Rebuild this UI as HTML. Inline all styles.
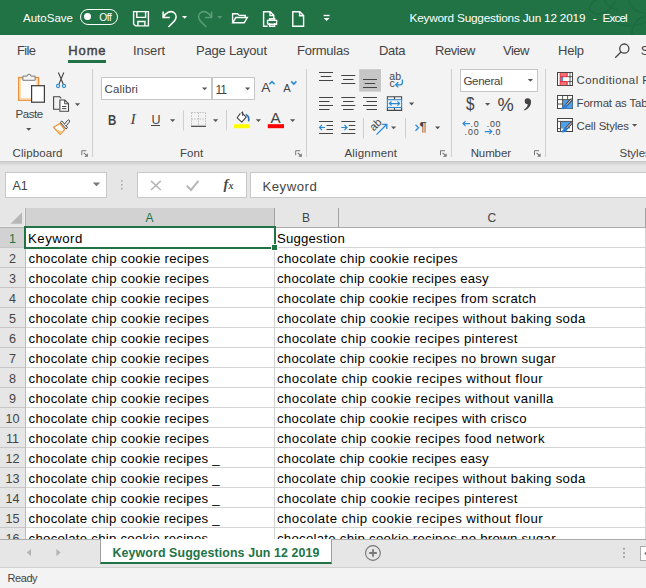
<!DOCTYPE html>
<html>
<head>
<meta charset="utf-8">
<title>Keyword Suggestions Jun 12 2019 - Excel</title>
<style>
*{box-sizing:border-box;margin:0;padding:0}
html,body{width:646px;height:588px;overflow:hidden;background:#f3f3f3;font-family:"Liberation Sans",sans-serif;color:#444}
#app{position:relative;width:646px;height:588px;overflow:hidden}
#app div,#app span,#app svg{position:absolute}
.tx{white-space:nowrap;display:block}
svg{overflow:visible}
#title{left:0;top:0;width:646px;height:35px;background:#217346;overflow:hidden}
#tabs{left:0;top:35px;width:646px;height:31px;background:#f3f3f3;overflow:hidden}
#ribbon{left:0;top:66px;width:646px;height:95px;background:#f3f3f3;overflow:hidden}
.sep{width:1px;background:#cfcfcf}
.box{background:#fff;border:1px solid #c6c6c6}
#fbar{left:0;top:161px;width:646px;height:47px;background:#e6e6e6;overflow:hidden}
#grid{left:0;top:208px;width:646px;height:331px;background:#fff;overflow:hidden}
#sheetbar{left:0;top:539px;width:646px;height:29px;background:#e6e6e6;overflow:hidden}
#status{left:0;top:568px;width:646px;height:20px;background:#f3f3f3;overflow:hidden}
.hl{height:1px;background:#d4d4d4;left:26px;width:620px}
.vl{width:1px;background:#d4d4d4;top:20px;height:320px}
</style>
</head>
<body>
<div id="app">

<div id="title">
<svg style="left:520px;top:0" width="126" height="35" viewBox="520 0 126 35" fill="none" stroke="#1d6b40" stroke-width="1.4"><path d="M596 0c-8 4-8 11-1 13.500s16-3 21-13.500"/><path d="M604 0c3 5 8 9 14 10"/><path d="M629 0c1 7 7 12.500 17 13.500"/><path d="M632 35c-1-9 5-17 14-19"/><path d="M612 20c8 6 20 8 34 2"/></svg>
<span class="tx" style="left:23.00px;top:12.97px;font-size:11.5px;line-height:11.5px;color:#fff;letter-spacing:0.019px;">AutoSave</span>
<div style="left:80px;top:9px;width:38px;height:16px;border:1px solid #fff;border-radius:8px"></div>
<div style="left:84.4px;top:13.4px;width:7.1px;height:7.1px;border-radius:50%;background:#fff"></div>
<span class="tx" style="left:99.20px;top:12.68px;font-size:10.3px;line-height:10.3px;color:#fff;letter-spacing:-0.474px;">Off</span>
<span class="tx" style="left:409.50px;top:12.91px;font-size:11.8px;line-height:11.8px;color:#fff;letter-spacing:-0.212px;">Keyword Suggestions Jun 12 2019</span>
<span class="tx" style="left:592.80px;top:12.91px;font-size:11.8px;line-height:11.8px;color:#fff;">-</span>
<span class="tx" style="left:602.60px;top:12.91px;font-size:11.8px;line-height:11.8px;color:#fff;letter-spacing:-0.939px;">Excel</span>
</div>
<div style="left:0;top:0;width:646px;height:35px"><svg style="left:0;top:0" width="646" height="35" viewBox="0 0 646 35" fill="none" stroke-linejoin="miter"><path d="M133.6 11.6H148.4V25.9H135.6L133.6 23.9z" stroke="#fff" stroke-width="1.4"/><path d="M136.8 11.6V17.4H145.6V11.6M137.9 25.9V21.5H144.9V25.9" stroke="#fff" stroke-width="1.4"/><path d="M163.1 11.6V17.5H169.8" stroke="#fff" stroke-width="1.5"/><path d="M163.4 17.2C165.6 12.6 170.6 10.2 174 12.6C177.2 14.9 176.6 18.8 173.8 21.6L168.4 27" stroke="#fff" stroke-width="1.5"/><path d="M182 16h5.2l-2.6 2.8z" fill="#fff"/><path d="M211.6 11.6V17.5H204.9" stroke="#5a9c78" stroke-width="1.5"/><path d="M211.3 17.2C209.1 12.6 204.1 10.2 200.7 12.6C197.500 14.9 198.1 18.8 200.9 21.6L206.3 27" stroke="#5a9c78" stroke-width="1.5"/><path d="M217.2 16h5.2l-2.6 2.8z" fill="#5a9c78"/><path d="M232.6 22.6V13.8H237.6L239.2 15.4H245.2V17.4" stroke="#fff" stroke-width="1.4"/><path d="M232.7 22.8L235.8 17.5H247.3L244.2 22.8z" stroke="#fff" stroke-width="1.4"/><path d="M267.6 26.2H263.6V11.8H270.2L273.8 15.4V18.6M270 11.8V15.6H273.8" stroke="#fff" stroke-width="1.4"/><path d="M267.6 24.2V20.4H276.6V24.2H267.6M269.6 20.4V18.8H274.6V20.4M269.6 23V26.2H274.6V23" stroke="#fff" stroke-width="1.4"/><path d="M292.8 11.8H299.8L303.6 15.6V26.2H292.8zM299.6 11.8V15.8H303.6" stroke="#fff" stroke-width="1.4"/><path d="M323.6 15.5H329.6" stroke="#fff" stroke-width="1.4"/><path d="M323.6 18h6l-3 3.1z" fill="#fff"/></svg></div>
<div id="tabs">
<span class="tx" style="left:17.00px;top:9.20px;font-size:13px;line-height:13px;color:#444;letter-spacing:-0.649px;">File</span>
<span class="tx" style="left:133.00px;top:9.20px;font-size:13px;line-height:13px;color:#444;letter-spacing:-0.103px;">Insert</span>
<span class="tx" style="left:196.00px;top:9.20px;font-size:13px;line-height:13px;color:#444;letter-spacing:-0.200px;">Page Layout</span>
<span class="tx" style="left:297.00px;top:9.20px;font-size:13px;line-height:13px;color:#444;letter-spacing:-0.240px;">Formulas</span>
<span class="tx" style="left:379.00px;top:9.20px;font-size:13px;line-height:13px;color:#444;letter-spacing:-0.320px;">Data</span>
<span class="tx" style="left:435.00px;top:9.20px;font-size:13px;line-height:13px;color:#444;letter-spacing:-0.445px;">Review</span>
<span class="tx" style="left:503.00px;top:9.20px;font-size:13px;line-height:13px;color:#444;letter-spacing:-0.481px;">View</span>
<span class="tx" style="left:558.00px;top:9.20px;font-size:13px;line-height:13px;color:#444;letter-spacing:-0.246px;">Help</span>
<span class="tx" style="left:68.30px;top:9.20px;font-size:13px;line-height:13px;color:#444;letter-spacing:0.874px;-webkit-text-stroke:0.45px #444;">Home</span>
<span class="tx" style="left:640.70px;top:9.20px;font-size:13px;line-height:13px;color:#444;">Search</span>
<div style="left:68px;top:25px;width:38px;height:3px;background:#217346"></div>
<svg style="left:614px;top:8px" width="17" height="16" viewBox="0 0 17 16" fill="none" stroke="#444" stroke-width="1.3"><circle cx="10.3" cy="5.6" r="4.6"/><path d="M7 9L1.2 14.8"/></svg>
</div>
<div id="ribbon">
<div class="sep" style="left:92.0px;top:3px;height:88px"></div>
<div class="sep" style="left:306.0px;top:3px;height:88px"></div>
<div class="sep" style="left:451.0px;top:3px;height:88px"></div>
<div class="sep" style="left:545.0px;top:3px;height:88px"></div>
<span class="tx" style="left:15.60px;top:42.67px;font-size:11.5px;line-height:11.5px;color:#444;letter-spacing:-0.452px;">Paste</span>
<span class="tx" style="left:12.50px;top:82.17px;font-size:11.5px;line-height:11.5px;color:#444;letter-spacing:0.097px;">Clipboard</span>
<span class="tx" style="left:180.00px;top:81.77px;font-size:11.5px;line-height:11.5px;color:#444;letter-spacing:0.096px;">Font</span>
<span class="tx" style="left:344.40px;top:81.67px;font-size:11.5px;line-height:11.5px;color:#444;letter-spacing:0.183px;">Alignment</span>
<span class="tx" style="left:470.70px;top:81.77px;font-size:11.5px;line-height:11.5px;color:#444;letter-spacing:-0.120px;">Number</span>
<span class="tx" style="left:619.50px;top:81.77px;font-size:11.5px;line-height:11.5px;color:#444;">Styles</span>
<div class="box" style="left:101px;top:11px;width:111px;height:23px"></div>
<div class="box" style="left:212px;top:11px;width:43px;height:23px"></div>
<div class="box" style="left:460px;top:3px;width:78px;height:23px"></div>
<span class="tx" style="left:104.60px;top:18.07px;font-size:11.5px;line-height:11.5px;color:#444;letter-spacing:0.118px;">Calibri</span>
<span class="tx" style="left:215.60px;top:17.64px;font-size:12px;line-height:12px;color:#444;letter-spacing:-1.1px;">11</span>
<span class="tx" style="left:463.40px;top:10.07px;font-size:11.5px;line-height:11.5px;color:#444;letter-spacing:-0.252px;">General</span>
<span class="tx" style="left:108.40px;top:46.65px;font-size:14px;line-height:14px;color:#444;font-weight:bold;transform:scaleX(.82);transform-origin:0 0;">B</span>
<span class="tx" style="left:130.60px;top:45.38px;font-size:15.5px;line-height:15.5px;color:#444;font-style:italic;font-family:&quot;Liberation Serif&quot;,serif;">I</span>
<span class="tx" style="left:151.60px;top:47.72px;font-size:12.5px;line-height:12.5px;color:#444;letter-spacing:-1.327px;">U</span>
<div style="left:151.3px;top:59px;width:8.4px;height:1px;background:#444"></div>
<span class="tx" style="left:261.20px;top:14.99px;font-size:13.6px;line-height:13.6px;color:#444;">A</span>
<span class="tx" style="left:283.20px;top:17.22px;font-size:11.2px;line-height:11.2px;color:#444;">A</span>
<span class="tx" style="left:270.60px;top:44.03px;font-size:15.2px;line-height:15.2px;color:#444;">A</span>
<span class="tx" style="left:466.40px;top:28.84px;font-size:18.5px;line-height:18.5px;color:#444;transform:scaleX(.82);transform-origin:0 0;">$</span>
<span class="tx" style="left:497.40px;top:29.71px;font-size:18.3px;line-height:18.3px;color:#444;letter-spacing:-0.972px;">%</span>
<span class="tx" style="left:576.60px;top:9.00px;font-size:11.4px;line-height:11.4px;color:#444;letter-spacing:0.458px;">Conditional Formatting</span>
<span class="tx" style="left:576.60px;top:32.05px;font-size:11.4px;line-height:11.4px;color:#444;letter-spacing:-0.135px;">Format as Table</span>
<span class="tx" style="left:576.60px;top:54.85px;font-size:11.4px;line-height:11.4px;color:#444;letter-spacing:-0.145px;">Cell Styles</span>
<span class="tx" style="left:389.30px;top:4.81px;font-size:10.5px;line-height:10.5px;color:#444;letter-spacing:0.021px;">ab</span>
<span class="tx" style="left:389.50px;top:12.01px;font-size:10.5px;line-height:10.5px;color:#444;">c</span>
<span class="tx" style="left:374.6px;top:55.599999999999994px;font-size:11px;line-height:11px;color:#444;transform:rotate(-43deg);transform-origin:0 100%;">ab</span>
<span class="tx" style="left:419.40px;top:54.07px;font-size:13.5px;line-height:13.5px;color:#444;">¶</span>
<span class="tx" style="left:470.60px;top:54.05px;font-size:8.8px;line-height:8.8px;color:#444;letter-spacing:0.661px;">.0</span>
<span class="tx" style="left:464.60px;top:61.85px;font-size:8.8px;line-height:8.8px;color:#444;letter-spacing:0.883px;">.00</span>
<span class="tx" style="left:486.80px;top:54.05px;font-size:8.8px;line-height:8.8px;color:#444;letter-spacing:0.683px;">.00</span>
<span class="tx" style="left:492.60px;top:61.85px;font-size:8.8px;line-height:8.8px;color:#444;letter-spacing:0.461px;">.0</span>
<svg style="left:0;top:0" width="646" height="95" viewBox="0 66 646 95" fill="none" stroke-linecap="butt">
<rect x="18.7" y="77.6" width="19.8" height="22.6" fill="#fbfbfb" stroke="#ec8f3c" stroke-width="1.4"/>
<rect x="20.1" y="79" width="17" height="19.8" fill="none" stroke="#fad6a2" stroke-width="1.4"/>
<path d="M22.9 80.3v-4.2h4.2a1.9 1.9 0 0 1 3.8 0h4.2v4.2z" fill="#f3f3f3" stroke="#7a7a7a" stroke-width="1"/>
<rect x="31.6" y="85.7" width="12.8" height="16.5" fill="#fff" stroke="#3b3b3b" stroke-width="1.2"/>
<path d="M26.1 128h5.2l-2.6 2.8z" fill="#555" stroke="none"/>
<path d="M58.4 72.5L63.2 84M63.8 72.5L59 84" stroke="#444" stroke-width="1.1"/>
<circle cx="58.1" cy="86" r="1.6" stroke="#2b8ad6" stroke-width="1.1"/><circle cx="64" cy="86" r="1.6" stroke="#2b8ad6" stroke-width="1.1"/>
<path d="M59.3 109.2H53.6V96.8H59.7L61.2 98.3" stroke="#444" stroke-width="1.1"/>
<path d="M59.9 100H64.800L68.5 103.7V111.2H59.9z" fill="#fff" stroke="#444" stroke-width="1.1"/>
<path d="M64.7 100.2V103.8H68.3M62 106.5H66.4M62 108.600H66.4" stroke="#444" stroke-width="1"/>
<path d="M74.9 103.3h5.2l-2.6 2.8z" fill="#555" stroke="none"/>
<path d="M53.4 127.2L59.9 123.4L64.6 129.6L60.1 134.4z" fill="#fff" stroke="#f08c2e" stroke-width="1.2" stroke-linejoin="round"/>
<path d="M55.800 129.200L62.800 131.400L60.1 134z" fill="#fbc878"/>
<path d="M60.3 122.300L61.900 121L67.600 127.600L66 128.900z" fill="#f3f3f3" stroke="#444" stroke-width="1"/>
<path d="M64.400 124.100L67.500 120.400a1.200 1.200 0 0 1 1.900 1.500L66.300 125.800" fill="#f3f3f3" stroke="#444" stroke-width="1"/>
<path d="M81.8 155.2V150.7H86.3" fill="none" stroke="#777" stroke-width="1"/><path d="M83.89999999999999 152.79999999999998L87.3 156.2" stroke="#777" stroke-width="1.1" fill="none"/><path d="M87.89999999999999 153.2V156.79999999999998H84.3z" fill="#777" stroke="none"/>
<path d="M202 87.5h5.2l-2.6 2.8z" fill="#555" stroke="none"/>
<path d="M245 87.5h5.2l-2.6 2.8z" fill="#555" stroke="none"/>
<path d="M269.400 84.200L272 81.600L274.600 84.200" stroke="#2b8ad6" stroke-width="1.6"/>
<path d="M291.200 81.400L293.800 84L296.400 81.400" stroke="#2b8ad6" stroke-width="1.6"/>
<path d="M170 119.3h5.2l-2.6 2.8z" fill="#555" stroke="none"/>
<path d="M183.5 110.5V130.5" stroke="#cfcfcf" stroke-width="1"/>
<path d="M191.5 112.5H205.5M191.5 119H205.5M191.5 112.5V125.5M198.5 112.5V125.5M205.5 112.5V125.5" stroke="#bdbdbd" stroke-width="1" stroke-dasharray="1.5 1.2"/>
<path d="M191 126.3H206" stroke="#444" stroke-width="1.2"/>
<path d="M213 119.3h5.2l-2.6 2.8z" fill="#555" stroke="none"/>
<path d="M226.5 110V130.5" stroke="#cfcfcf" stroke-width="1"/>
<rect x="234" y="124.2" width="16" height="4" fill="#ffff00"/>
<path d="M240.400 113.400L237.200 117.800L241.800 122.200L246.200 117.200L241.400 112.400" stroke="#444" stroke-width="1.1" fill="#fff" stroke-linejoin="round"/>
<path d="M242.600 111.600V115.800" stroke="#444" stroke-width="1.1"/>
<path d="M245.800 114.400C248.400 115.400 249.200 118 248.600 121.400" stroke="#2b6cb8" stroke-width="1.600"/>
<path d="M255.8 119.3h5.2l-2.6 2.8z" fill="#555" stroke="none"/>
<rect x="267.8" y="124.2" width="16.2" height="4" fill="#ff0000"/>
<path d="M290 119.3h5.2l-2.6 2.8z" fill="#555" stroke="none"/>
<path d="M295.7 155.2V150.7H300.2" fill="none" stroke="#777" stroke-width="1"/><path d="M297.8 152.79999999999998L301.2 156.2" stroke="#777" stroke-width="1.1" fill="none"/><path d="M301.8 153.2V156.79999999999998H298.2z" fill="#777" stroke="none"/>
<rect x="359.2" y="69.2" width="21.8" height="22.4" fill="#c6c6c6"/>
<path d="M319 72.5H333M320.75 76.5H331.25M319 80.5H333" stroke="#444" stroke-width="1.1"/>
<path d="M341.3 75.5H355.3M343.05 79.5H353.55M341.3 83.5H355.3" stroke="#444" stroke-width="1.1"/>
<path d="M363 79.5H377M364.75 83.5H375.25M363 87.5H377" stroke="#444" stroke-width="1.1"/>
<path d="M319 97.5H333M319 101.5H329.5M319 105.5H333M319 109.5H329.5" stroke="#444" stroke-width="1.1"/>
<path d="M341.3 97.5H355.3M343.05 101.5H353.55M341.3 105.5H355.3M343.05 109.5H353.55" stroke="#444" stroke-width="1.1"/>
<path d="M363 97.5H377M366.5 101.5H377M363 105.5H377M366.5 109.5H377" stroke="#444" stroke-width="1.1"/>
<path d="M319 121.5H333M326.5 125.5H333M326.5 129.5H333M319 133.5H333" stroke="#444" stroke-width="1.1"/>
<path d="M319.5 127.5H325M322 125L319.5 127.5L322 130" stroke="#2b8ad6" stroke-width="1.2"/>
<path d="M341.3 121.5H355.3M348.8 125.5H355.3M348.8 129.5H355.3M341.3 133.5H355.3" stroke="#444" stroke-width="1.1"/>
<path d="M341.3 127.5H347M344.5 125L347 127.5L344.5 130" stroke="#2b8ad6" stroke-width="1.2"/>
<path d="M363.5 118V138.5M405.5 118V138.5" stroke="#cfcfcf" stroke-width="1"/>
<path d="M402.4 79.600V82.400Q402.4 84.800 400 84.800H395.800M398.300 82.200L395.600 84.800L398.300 87.400" stroke="#2b8ad6" stroke-width="1.3"/>
<path d="M387.4 99.600V96.700H401.600V99.600M387.4 107.600V110.400H401.600V107.600M394.5 96.700V99.600M394.5 107.600V110.400" stroke="#444" stroke-width="1.1"/>
<rect x="387.4" y="99.700" width="14.200" height="7.800" stroke="#2b8ad6" stroke-width="1.1"/>
<path d="M389.4 103.600H399.600M391.500 101.500L389.4 103.600L391.500 105.700M397.500 101.500L399.600 103.600L397.500 105.700" stroke="#2b8ad6" stroke-width="1.2"/>
<path d="M409 102.6h5.2l-2.6 2.8z" fill="#555" stroke="none"/>
<path d="M376.5 134.6L386.3 124.8M382.3 124.4H386.8V128.9" stroke="#2b8ad6" stroke-width="1.3"/>
<path d="M391 126.4h5.2l-2.6 2.8z" fill="#555" stroke="none"/>
<path d="M415.5 124.8L418.5 127.8L415.5 130.8" stroke="#2b8ad6" stroke-width="1.3"/>
<path d="M435 126.4h5.2l-2.6 2.8z" fill="#555" stroke="none"/>
<path d="M440.5 155.2V150.7H445" fill="none" stroke="#777" stroke-width="1"/><path d="M442.6 152.79999999999998L446 156.2" stroke="#777" stroke-width="1.1" fill="none"/><path d="M446.6 153.2V156.79999999999998H443z" fill="#777" stroke="none"/>
<path d="M527.8 79h5.2l-2.6 2.8z" fill="#555" stroke="none"/>
<path d="M485 103h5.2l-2.6 2.8z" fill="#555" stroke="none"/>
<path d="M463 123.6H470M465.6 121.1L463 123.600L465.6 126.1" stroke="#2b8ad6" stroke-width="1.2"/>
<path d="M484.8 131.600H491.800M489.200 129.1L491.800 131.600L489.200 134.1" stroke="#2b8ad6" stroke-width="1.2"/>
<path d="M527.6 98.2a3 3 0 1 0 0.2 6c-.3 2.4-1.6 4.2-3.8 5.2l.6 1c4-1.6 6.4-4.6 6.4-8.400a3.300 3.300 0 0 0 -3.400 -3.800z" fill="#444"/>
<path d="M534.5 155.2V150.7H539" fill="none" stroke="#777" stroke-width="1"/><path d="M536.6 152.79999999999998L540 156.2" stroke="#777" stroke-width="1.1" fill="none"/><path d="M540.6 153.2V156.79999999999998H537z" fill="#777" stroke="none"/>
<rect x="557.5" y="72.5" width="15" height="13" fill="#fff" stroke="#444" stroke-width="1"/>
<rect x="560.5" y="73" width="6.5" height="3.4" fill="#f4727a"/><rect x="560.5" y="81.8" width="6.5" height="3.4" fill="#f4727a"/><rect x="560.5" y="76.6" width="2.6" height="5" fill="#4a90d9"/>
<path d="M560.2 72.8V85.2M567.2 72.8V76.8M567.2 81.5V85.2M560.2 76.7H567.2M560.2 81.6H567.2" stroke="#e8202a" stroke-width="1"/>
<path d="M567.5 76.7H572.5M567.5 81.6H572.5M570 73V85" stroke="#444" stroke-width="0.9"/>
<rect x="557.5" y="95.5" width="15" height="13" fill="#fff" stroke="#444" stroke-width="1"/>
<rect x="562.600" y="100" width="9.900" height="8.500" fill="#4f9fe8"/>
<path d="M557.5 99.600H572.5M557.5 104H562.600M562.600 95.5V108.5M567.600 95.5V99.600" stroke="#444" stroke-width="0.9"/>
<path d="M572.200 99L566 105.400" stroke="#444" stroke-width="2.800"/><path d="M571.800 99.400L566.400 105" stroke="#e8e8e8" stroke-width="1"/>
<path d="M566 104.200C563.400 104 563.400 107.400 560.400 108.600C563.600 110.200 567.600 108.600 567.400 105.600z" fill="#2b7cd3"/>
<rect x="557.5" y="118.5" width="15" height="13" fill="#fff" stroke="#444" stroke-width="1"/>
<rect x="560.600" y="121.400" width="9.400" height="7.200" fill="#4f9fe8"/>
<path d="M557.5 121.400H572.5M560.500 121.400V131.500M557.5 128.600H561" stroke="#444" stroke-width="0.9"/>
<path d="M572.200 122.200L566 128.600" stroke="#444" stroke-width="2.800"/><path d="M571.800 122.600L566.400 128.200" stroke="#e8e8e8" stroke-width="1"/>
<path d="M566 127.400C563.400 127.200 563.400 130.600 560.400 131.800C563.600 133.400 567.600 131.800 567.400 128.800z" fill="#2b7cd3"/>
<path d="M632 124h5.2l-2.6 2.8z" fill="#555" stroke="none"/>
</svg>
</div>
<div id="fbar">
<div style="left:0;top:0;width:646px;height:5px;background:linear-gradient(#c8c8c8,#d6d6d6 45%,#e6e6e6)"></div>
<div class="box" style="left:5px;top:11px;width:102px;height:26px;border-color:#c8c8c8"></div>
<div class="box" style="left:137px;top:11px;width:110px;height:26px;border-color:#c8c8c8"></div>
<div class="box" style="left:250px;top:11px;width:400px;height:26px;border-color:#c8c8c8"></div>
<span class="tx" style="left:12.40px;top:18.92px;font-size:12.5px;line-height:12.5px;color:#444;letter-spacing:0.011px;">A1</span>
<span class="tx" style="left:262.40px;top:18.73px;font-size:13.2px;line-height:13.2px;color:#444;letter-spacing:0.524px;">Keyword</span>
<span class="tx" style="left:223.60px;top:15.83px;font-size:14.5px;line-height:14.5px;color:#4a4a4a;font-weight:bold;font-style:italic;font-family:&quot;Liberation Serif&quot;,serif;">f</span>
<span class="tx" style="left:228.40px;top:19.63px;font-size:10px;line-height:10px;color:#4a4a4a;font-weight:bold;font-style:italic;font-family:&quot;Liberation Serif&quot;,serif;">x</span>
<svg style="left:0;top:0" width="646" height="47" viewBox="0 161 646 47" fill="none">
<path d="M92.8 182.4h7.4l-3.7 3.8z" fill="#777"/>
<path d="M121 180.2h1.6v1.6H121zM121 184h1.6v1.6H121zM121 187.8h1.6v1.6H121z" fill="#a6a6a6"/>
<path d="M151 180.8L160.800 190M160.800 180.8L151 190" stroke="#b6b6b6" stroke-width="1.6"/>
<path d="M186.8 185.8L191 190L198.4 180.8" stroke="#b6b6b6" stroke-width="2"/>
</svg>
</div>
<div id="grid">
<div style="left:0;top:0;width:646px;height:20px;background:#e6e6e6"></div>
<div style="left:26px;top:0;width:249px;height:19px;background:#d2d2d2"></div>
<div style="left:26px;top:18px;width:249px;height:2px;background:#217346"></div>
<div style="left:275px;top:19px;width:371px;height:1px;background:#ababab"></div>
<div style="left:274px;top:0;width:1px;height:20px;background:#a3a3a3"></div>
<div style="left:338px;top:0;width:1px;height:20px;background:#a3a3a3"></div>
<div style="left:645px;top:0;width:1px;height:20px;background:#a3a3a3"></div>
<div style="left:25px;top:0;width:1px;height:18px;background:#b0b0b0"></div>
<div style="left:24px;top:0;width:1px;height:19px;background:#eeeeee"></div>
<div style="left:0;top:18px;width:25px;height:1px;background:#eeeeee"></div>
<div style="left:0;top:19px;width:24px;height:1px;background:#b0b0b0"></div>
<svg style="left:0;top:0" width="26" height="20" viewBox="0 0 26 20"><path d="M22 4.4V15.8H10.5z" fill="#b7b7b7"/></svg>
<span class="tx" style="left:145.50px;top:4.24px;font-size:12px;line-height:12px;color:#217346;">A</span>
<span class="tx" style="left:302.00px;top:4.24px;font-size:12px;line-height:12px;color:#444;">B</span>
<span class="tx" style="left:487.50px;top:4.24px;font-size:12px;line-height:12px;color:#444;">C</span>
<div style="left:0;top:20px;width:26px;height:320px;background:#e6e6e6"></div>
<div style="left:0;top:20px;width:25px;height:20px;background:#d2d2d2"></div>
<div style="left:25px;top:20px;width:1px;height:320px;background:#bcbcbc"></div>
<div style="left:0;top:39px;width:25px;height:1px;background:#c6c6c6"></div>
<div class="hl" style="top:39px"></div>
<div style="left:0;top:59px;width:25px;height:1px;background:#c6c6c6"></div>
<div class="hl" style="top:59px"></div>
<div style="left:0;top:79px;width:25px;height:1px;background:#c6c6c6"></div>
<div class="hl" style="top:79px"></div>
<div style="left:0;top:99px;width:25px;height:1px;background:#c6c6c6"></div>
<div class="hl" style="top:99px"></div>
<div style="left:0;top:119px;width:25px;height:1px;background:#c6c6c6"></div>
<div class="hl" style="top:119px"></div>
<div style="left:0;top:139px;width:25px;height:1px;background:#c6c6c6"></div>
<div class="hl" style="top:139px"></div>
<div style="left:0;top:159px;width:25px;height:1px;background:#c6c6c6"></div>
<div class="hl" style="top:159px"></div>
<div style="left:0;top:179px;width:25px;height:1px;background:#c6c6c6"></div>
<div class="hl" style="top:179px"></div>
<div style="left:0;top:199px;width:25px;height:1px;background:#c6c6c6"></div>
<div class="hl" style="top:199px"></div>
<div style="left:0;top:219px;width:25px;height:1px;background:#c6c6c6"></div>
<div class="hl" style="top:219px"></div>
<div style="left:0;top:239px;width:25px;height:1px;background:#c6c6c6"></div>
<div class="hl" style="top:239px"></div>
<div style="left:0;top:259px;width:25px;height:1px;background:#c6c6c6"></div>
<div class="hl" style="top:259px"></div>
<div style="left:0;top:279px;width:25px;height:1px;background:#c6c6c6"></div>
<div class="hl" style="top:279px"></div>
<div style="left:0;top:299px;width:25px;height:1px;background:#c6c6c6"></div>
<div class="hl" style="top:299px"></div>
<div style="left:0;top:319px;width:25px;height:1px;background:#c6c6c6"></div>
<div class="hl" style="top:319px"></div>
<div style="left:0;top:339px;width:25px;height:1px;background:#c6c6c6"></div>
<div class="hl" style="top:339px"></div>
<div class="vl" style="left:274px"></div>
<div class="vl" style="left:645px"></div>
<span class="tx" style="left:9.10px;top:25.23px;font-size:12.6px;line-height:12.6px;color:#217346;">1</span>
<span class="tx" style="left:28.10px;top:24.03px;font-size:13.2px;line-height:13.2px;color:#000;letter-spacing:0.474px;">Keyword</span>
<span class="tx" style="left:277.00px;top:24.03px;font-size:13.2px;line-height:13.2px;color:#000;letter-spacing:0.194px;">Suggestion</span>
<span class="tx" style="left:9.10px;top:45.23px;font-size:12.6px;line-height:12.6px;color:#444;">2</span>
<span class="tx" style="left:28.60px;top:44.03px;font-size:13.2px;line-height:13.2px;color:#000;letter-spacing:0.281px;">chocolate chip cookie recipes</span>
<span class="tx" style="left:277.00px;top:44.03px;font-size:13.2px;line-height:13.2px;color:#000;letter-spacing:0.299px;">chocolate chip cookie recipes</span>
<span class="tx" style="left:9.10px;top:65.23px;font-size:12.6px;line-height:12.6px;color:#444;">3</span>
<span class="tx" style="left:28.60px;top:64.03px;font-size:13.2px;line-height:13.2px;color:#000;letter-spacing:0.281px;">chocolate chip cookie recipes</span>
<span class="tx" style="left:277.00px;top:64.03px;font-size:13.2px;line-height:13.2px;color:#000;letter-spacing:0.240px;">chocolate chip cookie recipes easy</span>
<span class="tx" style="left:9.10px;top:85.23px;font-size:12.6px;line-height:12.6px;color:#444;">4</span>
<span class="tx" style="left:28.60px;top:84.03px;font-size:13.2px;line-height:13.2px;color:#000;letter-spacing:0.281px;">chocolate chip cookie recipes</span>
<span class="tx" style="left:277.00px;top:84.03px;font-size:13.2px;line-height:13.2px;color:#000;letter-spacing:0.261px;">chocolate chip cookie recipes from scratch</span>
<span class="tx" style="left:9.10px;top:105.23px;font-size:12.6px;line-height:12.6px;color:#444;">5</span>
<span class="tx" style="left:28.60px;top:104.03px;font-size:13.2px;line-height:13.2px;color:#000;letter-spacing:0.281px;">chocolate chip cookie recipes</span>
<span class="tx" style="left:277.00px;top:104.03px;font-size:13.2px;line-height:13.2px;color:#000;letter-spacing:0.328px;">chocolate chip cookie recipes without baking soda</span>
<span class="tx" style="left:9.10px;top:125.23px;font-size:12.6px;line-height:12.6px;color:#444;">6</span>
<span class="tx" style="left:28.60px;top:124.03px;font-size:13.2px;line-height:13.2px;color:#000;letter-spacing:0.281px;">chocolate chip cookie recipes</span>
<span class="tx" style="left:277.00px;top:124.03px;font-size:13.2px;line-height:13.2px;color:#000;letter-spacing:0.365px;">chocolate chip cookie recipes pinterest</span>
<span class="tx" style="left:9.10px;top:145.23px;font-size:12.6px;line-height:12.6px;color:#444;">7</span>
<span class="tx" style="left:28.60px;top:144.03px;font-size:13.2px;line-height:13.2px;color:#000;letter-spacing:0.281px;">chocolate chip cookie recipes</span>
<span class="tx" style="left:277.00px;top:144.03px;font-size:13.2px;line-height:13.2px;color:#000;letter-spacing:0.272px;">chocolate chip cookie recipes no brown sugar</span>
<span class="tx" style="left:9.10px;top:165.23px;font-size:12.6px;line-height:12.6px;color:#444;">8</span>
<span class="tx" style="left:28.60px;top:164.03px;font-size:13.2px;line-height:13.2px;color:#000;letter-spacing:0.281px;">chocolate chip cookie recipes</span>
<span class="tx" style="left:277.00px;top:164.03px;font-size:13.2px;line-height:13.2px;color:#000;letter-spacing:0.446px;">chocolate chip cookie recipes without flour</span>
<span class="tx" style="left:9.10px;top:185.23px;font-size:12.6px;line-height:12.6px;color:#444;">9</span>
<span class="tx" style="left:28.60px;top:184.03px;font-size:13.2px;line-height:13.2px;color:#000;letter-spacing:0.281px;">chocolate chip cookie recipes</span>
<span class="tx" style="left:277.00px;top:184.03px;font-size:13.2px;line-height:13.2px;color:#000;letter-spacing:0.402px;">chocolate chip cookie recipes without vanilla</span>
<span class="tx" style="left:5.59px;top:205.23px;font-size:12.6px;line-height:12.6px;color:#444;">10</span>
<span class="tx" style="left:28.60px;top:204.03px;font-size:13.2px;line-height:13.2px;color:#000;letter-spacing:0.281px;">chocolate chip cookie recipes</span>
<span class="tx" style="left:277.00px;top:204.03px;font-size:13.2px;line-height:13.2px;color:#000;letter-spacing:0.300px;">chocolate chip cookie recipes with crisco</span>
<span class="tx" style="left:6.06px;top:225.23px;font-size:12.6px;line-height:12.6px;color:#444;">11</span>
<span class="tx" style="left:28.60px;top:224.03px;font-size:13.2px;line-height:13.2px;color:#000;letter-spacing:0.281px;">chocolate chip cookie recipes</span>
<span class="tx" style="left:277.00px;top:224.03px;font-size:13.2px;line-height:13.2px;color:#000;letter-spacing:0.391px;">chocolate chip cookie recipes food network</span>
<span class="tx" style="left:5.59px;top:245.23px;font-size:12.6px;line-height:12.6px;color:#444;">12</span>
<span class="tx" style="left:28.60px;top:244.03px;font-size:13.2px;line-height:13.2px;color:#000;letter-spacing:0.259px;">chocolate chip cookie recipes _</span>
<span class="tx" style="left:277.00px;top:244.03px;font-size:13.2px;line-height:13.2px;color:#000;letter-spacing:0.240px;">chocolate chip cookie recipes easy</span>
<span class="tx" style="left:5.59px;top:265.23px;font-size:12.6px;line-height:12.6px;color:#444;">13</span>
<span class="tx" style="left:28.60px;top:264.03px;font-size:13.2px;line-height:13.2px;color:#000;letter-spacing:0.259px;">chocolate chip cookie recipes _</span>
<span class="tx" style="left:277.00px;top:264.03px;font-size:13.2px;line-height:13.2px;color:#000;letter-spacing:0.328px;">chocolate chip cookie recipes without baking soda</span>
<span class="tx" style="left:5.59px;top:285.23px;font-size:12.6px;line-height:12.6px;color:#444;">14</span>
<span class="tx" style="left:28.60px;top:284.03px;font-size:13.2px;line-height:13.2px;color:#000;letter-spacing:0.259px;">chocolate chip cookie recipes _</span>
<span class="tx" style="left:277.00px;top:284.03px;font-size:13.2px;line-height:13.2px;color:#000;letter-spacing:0.365px;">chocolate chip cookie recipes pinterest</span>
<span class="tx" style="left:5.59px;top:305.23px;font-size:12.6px;line-height:12.6px;color:#444;">15</span>
<span class="tx" style="left:28.60px;top:304.03px;font-size:13.2px;line-height:13.2px;color:#000;letter-spacing:0.259px;">chocolate chip cookie recipes _</span>
<span class="tx" style="left:277.00px;top:304.03px;font-size:13.2px;line-height:13.2px;color:#000;letter-spacing:0.446px;">chocolate chip cookie recipes without flour</span>
<span class="tx" style="left:5.59px;top:325.23px;font-size:12.6px;line-height:12.6px;color:#444;">16</span>
<span class="tx" style="left:28.60px;top:324.03px;font-size:13.2px;line-height:13.2px;color:#000;letter-spacing:0.259px;">chocolate chip cookie recipes _</span>
<span class="tx" style="left:277.00px;top:324.03px;font-size:13.2px;line-height:13.2px;color:#000;letter-spacing:0.272px;">chocolate chip cookie recipes no brown sugar</span>
<div style="left:24px;top:18px;width:252px;height:23px;border:2px solid #217346"></div>
<div style="left:271px;top:36px;background:#217346;border:1px solid #fff;box-sizing:content-box;width:5px;height:5px"></div>
</div>
<div id="sheetbar">
<div style="left:0;top:0;width:646px;height:1px;background:#ababab"></div>
<div style="left:0;top:28px;width:646px;height:1px;background:#d0d0d0"></div>
<div style="left:100px;top:0;width:232px;height:25px;background:#fff;border-left:1px solid #a0a0a0;border-right:1px solid #a0a0a0;border-bottom:2px solid #217346"></div>
<span class="tx" style="left:112.50px;top:7.90px;font-size:12.4px;line-height:12.4px;color:#217346;letter-spacing:0.104px;font-weight:bold;">Keyword Suggestions Jun 12 2019</span>
<svg style="left:0;top:0" width="646" height="27" viewBox="0 539 646 27" fill="none">
<path d="M31 549L26.8 552.6L31 556.2z" fill="#b4b4b4"/><path d="M56.4 549L60.6 552.6L56.4 556.2z" fill="#b4b4b4"/>
<circle cx="372.9" cy="553" r="7.4" stroke="#777" stroke-width="1.1"/><path d="M369.2 553H376.800M373 549.2V556.800" stroke="#777" stroke-width="1.8"/>
<path d="M623 547.800h2v2h-2zM623 552h2v2h-2zM623 556h2v2h-2z" fill="#aaa"/>
<rect x="640.5" y="546.5" width="10" height="14" fill="#fff" stroke="#ababab"/>
<path d="M646.4 551.2L644.2 553.400L646.4 555.600z" fill="#777"/>
</svg>
</div>
<div id="status">
<span class="tx" style="left:7.50px;top:4.59px;font-size:11px;line-height:11px;color:#444;letter-spacing:-0.424px;">Ready</span>
</div>
</div>
</body>
</html>
